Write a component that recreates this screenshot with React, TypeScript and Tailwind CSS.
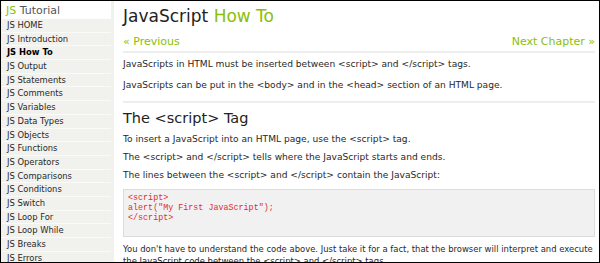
const menu = [
  "JS HOME",
  "JS Introduction",
  "JS How To",
  "JS Output",
  "JS Statements",
  "JS Comments",
  "JS Variables",
  "JS Data Types",
  "JS Objects",
  "JS Functions",
  "JS Operators",
  "JS Comparisons",
  "JS Conditions",
  "JS Switch",
  "JS Loop For",
  "JS Loop While",
  "JS Breaks",
  "JS Errors",
];

export default function App() {
  return (
    <div className="h-[263px] w-[600px] overflow-hidden border border-black bg-white font-['DejaVu_Sans',sans-serif] text-[#282828]">
      <div className="flex h-full">
        {/* sidebar */}
        <aside className="w-[113px] shrink-0 bg-[#f1f1ed] pl-[1px] pr-[3px]">
          <div className="bg-white pb-[2px] pl-[4px] pt-[4px] text-[11px] leading-[12px] text-[#555]">
            <span className="text-[#8AC007]">JS</span> Tutorial
          </div>
          <ul>
            {menu.map((m) => (
              <li
                key={m}
                className={
                  "h-[13.7px] border-b border-[#fafaf8] pl-[5px] text-[8.4px] leading-[13px] " +
                  (m === "JS How To" ? "font-bold text-black" : "")
                }
              >
                {m}
              </li>
            ))}
          </ul>
        </aside>

        {/* main content */}
        <main className="min-w-0 flex-1 pl-[9px] pr-[4px] pt-[4px] text-[9.1px]">
          <h1 className="text-[17px] leading-[22px] text-[#222]">
            JavaScript <span className="text-[#8AC007]">How To</span>
          </h1>
          <div className="mt-[8px] flex justify-between text-[11px] leading-[14px] text-[#8AC007]">
            <span>« Previous</span>
            <span>Next Chapter »</span>
          </div>
          <hr className="mt-[2px] border-t-2 border-[#eeeeee]" />
          <p className="mt-[6px] leading-[11px]">
            JavaScripts in HTML must be inserted between &lt;script&gt; and &lt;/script&gt; tags.
          </p>
          <p className="mt-[10px] leading-[11px]">
            JavaScripts can be put in the &lt;body&gt; and in the &lt;head&gt; section of an HTML page.
          </p>
          <hr className="mt-[10px] border-t-2 border-[#eeeeee]" />
          <h2 className="mt-[5px] text-[14.5px] leading-[20px] text-[#222]">The &lt;script&gt; Tag</h2>
          <p className="mt-[6px] leading-[11px]">
            To insert a JavaScript into an HTML page, use the &lt;script&gt; tag.
          </p>
          <p className="mt-[7px] leading-[11px]">
            The &lt;script&gt; and &lt;/script&gt; tells where the JavaScript starts and ends.
          </p>
          <p className="mt-[7px] leading-[11px]">
            The lines between the &lt;script&gt; and &lt;/script&gt; contain the JavaScript:
          </p>
          <div className="mt-[8px] h-[48px] border border-[#dcdcdc] bg-[#f1f1f1] py-[3px] pl-[4px] font-['Liberation_Mono',monospace] text-[8.4px] leading-[10px] text-[#e12d2d]">
            <div>&lt;script&gt;</div>
            <div>alert("My First JavaScript");</div>
            <div>&lt;/script&gt;</div>
          </div>
          <p className="mt-[6px] whitespace-nowrap text-[8.45px] leading-[12px]">
            You don't have to understand the code above. Just take it for a fact, that the browser will interpret and execute
            <br />
            the JavaScript code between the &lt;script&gt; and &lt;/script&gt; tags.
          </p>
        </main>
      </div>
    </div>
  );
}
